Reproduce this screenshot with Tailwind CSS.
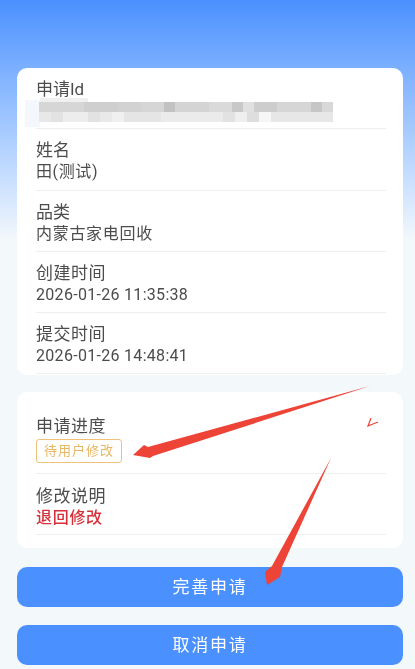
<!DOCTYPE html>
<html lang="zh">
<head>
<meta charset="utf-8">
<script src="https://cdn.jsdelivr.net/npm/@tailwindcss/browser@4"></script>
</head>
<body class="m-0">
<div class="relative w-[415px] h-[669px] overflow-hidden bg-[#f3f8fb] font-['Roboto','Noto_Sans_CJK_SC',sans-serif] text-[#4c4c4c] blur-[0.4px]">
  <div class="absolute inset-x-0 top-0 h-[240px] bg-gradient-to-b from-[#4a90fe] to-[#f3f8fb]"></div>
  <div class="relative flex flex-col pl-[17px] pr-[12px] pt-[68px]">
    <section class="bg-white rounded-[10px] pl-[19px] pr-[17px] h-[307px]">
      <div class="h-[61px] pt-[10px] border-b border-[#eeeeee] relative">
        <div class="text-[17px] leading-[22px]">申请Id</div>
        <div class="absolute left-[-11px] top-[32px] w-[15px] h-[27px] bg-[#f4f7fb]"></div>
        <div class="absolute left-[4px] top-[30px] w-[48px] h-[4px] bg-[#f0f0f0]"></div>
        <div class="relative flex flex-col mt-[2px] ml-[3px] w-[294px]">
          <div class="flex h-[10px]">
            <i class="w-[49px] bg-[#d6d6d6]"></i><i class="w-[37px] bg-[#cfcfcf]"></i><i class="w-[25px] bg-[#d2d2d2]"></i><i class="w-[25px] bg-[#d6d6d6]"></i><i class="w-[12px] bg-[#c2c2c2]"></i><i class="w-[37px] bg-[#d4d4d4]"></i><i class="w-[25px] bg-[#dadada]"></i><i class="w-[12px] bg-[#c8c8c8]"></i><i class="w-[12px] bg-[#e0e0e0]"></i><i class="w-[25px] bg-[#cdcdcd]"></i><i class="w-[37px] bg-[#d6d6d6]"></i><i class="w-[12px] bg-[#c6c6c6]"></i><i class="w-[12px] bg-[#d8d8d8]"></i>
          </div>
          <div class="flex h-[10px]">
            <i class="w-[12px] bg-[#e8e8e8]"></i><i class="w-[12px] bg-[#e2e2e2]"></i><i class="w-[25px] bg-[#ededed]"></i><i class="w-[12px] bg-[#e2e2e2]"></i><i class="w-[12px] bg-[#e9e9e9]"></i><i class="w-[12px] bg-[#f0f0f0]"></i><i class="w-[37px] bg-[#e5e5e5]"></i><i class="w-[62px] bg-[#ebebeb]"></i><i class="w-[12px] bg-[#e2e2e2]"></i><i class="w-[12px] bg-[#efefef]"></i><i class="w-[12px] bg-[#dedede]"></i><i class="w-[12px] bg-[#f6f6f6]"></i><i class="w-[62px] bg-[#e7e7e7]"></i>
          </div>
        </div>
      </div>
      <div class="h-[62px] pt-[11px] border-b border-[#eeeeee]">
        <div class="text-[17px] leading-[21px]">姓名</div>
        <div class="text-[16px] leading-[21px] tracking-[0.6px]">田(测试)</div>
      </div>
      <div class="h-[61px] pt-[11px] border-b border-[#eeeeee]">
        <div class="text-[17px] leading-[21px]">品类</div>
        <div class="text-[16px] leading-[21px] tracking-[0.7px]">内蒙古家电回收</div>
      </div>
      <div class="h-[61px] pt-[11px] border-b border-[#eeeeee]">
        <div class="text-[17px] leading-[21px] tracking-[0.5px]">创建时间</div>
        <div class="text-[16px] leading-[21px] tracking-[0.3px]">2026-01-26 11:35:38</div>
      </div>
      <div class="h-[61px] pt-[11px] border-b border-[#eeeeee]">
        <div class="text-[17px] leading-[21px] tracking-[0.5px]">提交时间</div>
        <div class="text-[16px] leading-[21px] tracking-[0.3px]">2026-01-26 14:48:41</div>
      </div>
    </section>
    <section class="mt-[17px] bg-white rounded-[10px] pl-[19px] pr-[17px] h-[156px]">
      <div class="h-[82px] pt-[23px] border-b border-[#eeeeee]">
        <div class="text-[17px] leading-[22px] tracking-[0.5px]">申请进度</div>
        <div class="mt-[2px] inline-flex items-center justify-center w-[86px] h-[24px] border border-[#eec27a] rounded-[3px] text-[13px] tracking-[1px] text-[#e8b765]">待用户修改</div>
      </div>
      <div class="h-[61px] pt-[12px] border-b border-[#eeeeee]">
        <div class="text-[17px] leading-[21px] tracking-[0.5px]">修改说明</div>
        <div class="text-[16px] leading-[21px] tracking-[0.7px] font-medium text-[#d8303a]">退回修改</div>
      </div>
    </section>
    <button class="mt-[19px] h-[40px] pt-[2px] rounded-[10px] bg-[#4a90fe] text-white text-[17px] tracking-[1.7px]">完善申请</button>
    <button class="mt-[18px] h-[40px] pt-[2px] rounded-[10px] bg-[#4a90fe] text-white text-[17px] tracking-[1.7px]">取消申请</button>
  </div>
  <svg class="absolute inset-0" width="415" height="669" viewBox="0 0 415 669" fill="#ee4337">
    <path d="M370 386 L148 447 L144 445 L133 455 L150 458 L153 456 Z"/>
    <path d="M331 458 L272 566 L265 572 L267 585 L280 577 L282 567 Z"/>
    <path d="M371 418 L368 426 L378 422" fill="none" stroke="#ee4337" stroke-width="1.2"/>
  </svg>
</div>
</body>
</html>
